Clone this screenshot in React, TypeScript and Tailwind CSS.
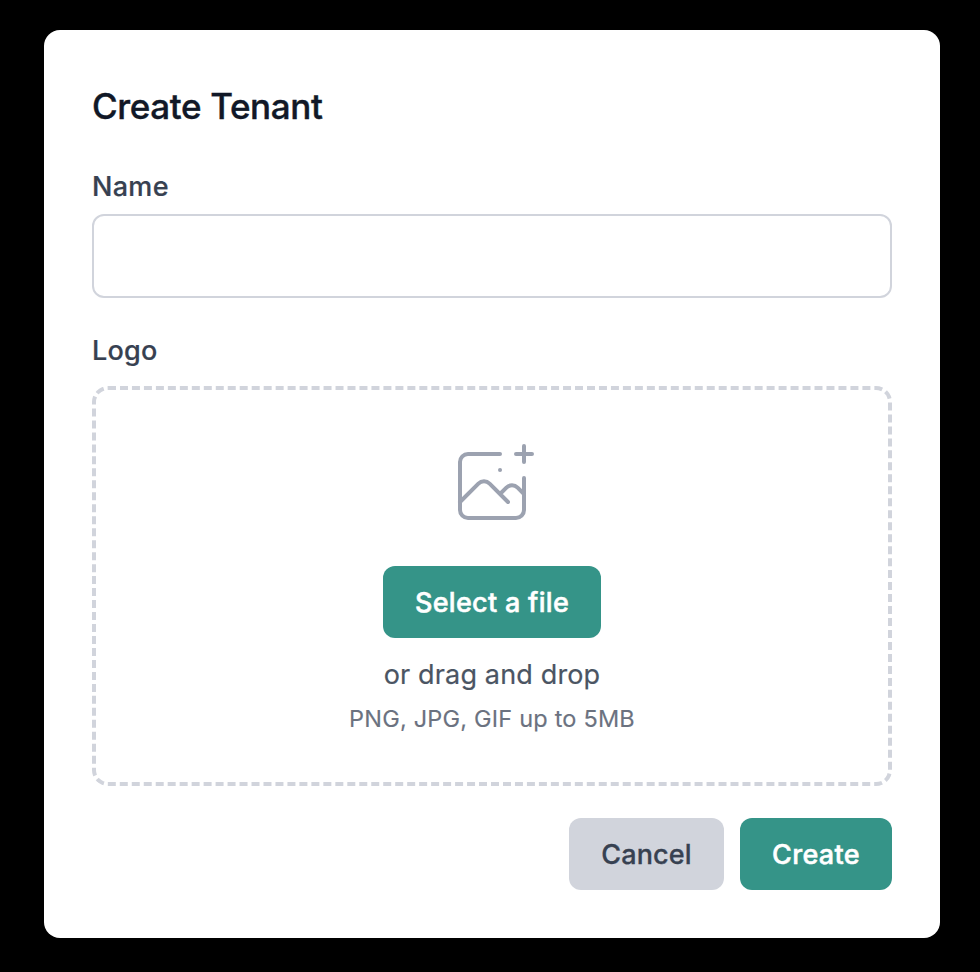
export default function App() {
  return (
    <div className="h-[972px] w-[980px] bg-black pl-11 pt-[30px] font-[Inter,sans-serif] font-medium">
      <main className="h-[908px] w-[896px] rounded-2xl bg-white px-12 pt-12">
        <h1 className="text-[35px] leading-[56px] tracking-[-0.37px] text-[#111827] [-webkit-text-stroke:0.4px_#111827]">Create Tenant</h1>
        <label htmlFor="name" className="mt-[33px] block text-[27px] leading-10 tracking-[0.3px] text-[#374151] [-webkit-text-stroke:0.2px_#374151]">Name</label>
        <input id="name" className="mt-[7px] block h-[84px] w-full rounded-xl border-2 border-[#d1d4dc] px-6 outline-none" />
        <div className="mt-[33px] text-[27px] leading-10 tracking-[0.2px] text-[#374151] [-webkit-text-stroke:0.2px_#374151]">Logo</div>
        <section className="mt-[15px] flex h-[400px] flex-col items-center rounded-2xl border-4 border-dashed border-[#d1d4dc] pt-[44px]">
          <svg className="h-24 w-24 text-[#9ca2b0]" viewBox="0 0 24 24" fill="none" stroke="currentColor" strokeWidth="1" strokeLinecap="round" strokeLinejoin="round">
            <path d="M14 5H6a2 2 0 0 0-2 2v12a2 2 0 0 0 2 2h12a2 2 0 0 0 2-2v-8" />
            <path d="M4 17l4.6-4.6a2 2 0 0 1 2.8 0L16 17M14 15l1.6-1.6a2 2 0 0 1 2.8 0L20 15M14 9h.01M18 5h4M20 3v4" />
          </svg>
          <button className="mt-9 h-[72px] w-[218px] rounded-xl bg-[#359488] pt-0.5 text-[27px] tracking-[0.3px] text-white [-webkit-text-stroke:0.5px_white]">Select a file</button>
          <p className="mt-[17px] text-[27px] font-normal leading-10 tracking-[0.15px] text-[#4b5563] [-webkit-text-stroke:0.2px_#4b5563]">or drag and drop</p>
          <p className="mt-2 text-[23.5px] font-normal leading-8 tracking-[0.2px] text-[#6b7280] [-webkit-text-stroke:0.15px_#6b7280]">PNG, JPG, GIF up to 5MB</p>
        </section>
        <footer className="mt-8 flex justify-end gap-4 text-[27px]">
          <button className="h-[72px] w-[155px] rounded-xl bg-[#d1d4dc] pt-0.5 tracking-[0.15px] text-[#374151] [-webkit-text-stroke:0.3px_#374151]">Cancel</button>
          <button className="h-[72px] w-[152px] rounded-xl bg-[#359488] pt-0.5 tracking-[0.3px] text-white [-webkit-text-stroke:0.5px_white]">Create</button>
        </footer>
      </main>
    </div>
  );
}
